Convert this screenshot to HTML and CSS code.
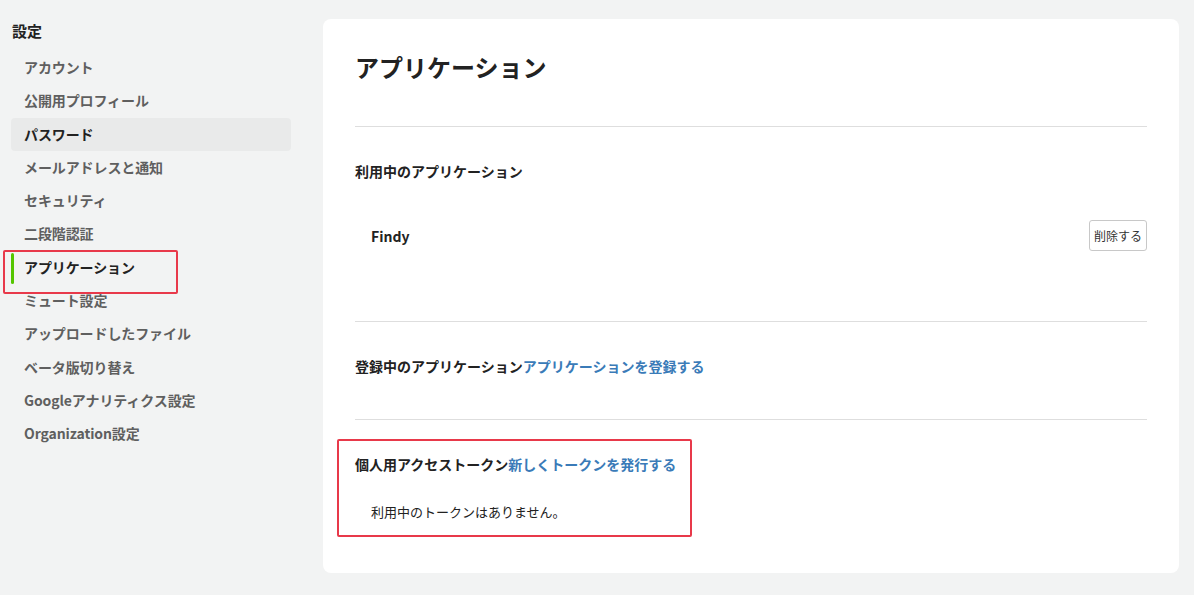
FILE: index.html
```html
<!DOCTYPE html>
<html lang="ja">
<head>
<meta charset="utf-8">
<title>設定 - アプリケーション</title>
<link rel="stylesheet" href="styles.css">
</head>
<body>
<div class="page">
  <nav class="sidebar">
    <div class="sidebar-title">設定</div>
    <ul class="menu">
      <li class="menu-item">アカウント</li>
      <li class="menu-item">公開用プロフィール</li>
      <li class="menu-item is-hover">パスワード</li>
      <li class="menu-item">メールアドレスと通知</li>
      <li class="menu-item">セキュリティ</li>
      <li class="menu-item">二段階認証</li>
      <li class="menu-item is-active">アプリケーション<span class="mark mark-side"></span></li>
      <li class="menu-item">ミュート設定</li>
      <li class="menu-item">アップロードしたファイル</li>
      <li class="menu-item">ベータ版切り替え</li>
      <li class="menu-item">Googleアナリティクス設定</li>
      <li class="menu-item">Organization設定</li>
    </ul>
  </nav>
  <main class="card">
    <h1 class="card-title">アプリケーション</h1>
    <section class="section section-used">
      <h2 class="section-heading">利用中のアプリケーション</h2>
      <div class="app-row">
        <span class="app-name">Findy</span>
        <button class="btn">削除する</button>
      </div>
    </section>
    <section class="section section-registered">
      <h2 class="section-heading">登録中のアプリケーション<a class="link">アプリケーションを登録する</a></h2>
    </section>
    <section class="section section-token">
      <h2 class="section-heading">個人用アクセストークン<a class="link">新しくトークンを発行する</a></h2>
      <p class="empty">利用中のトークンはありません。</p>
      <span class="mark mark-token"></span>
    </section>
  </main>
</div>
</body>
</html>
```
FILE: styles.css
```css
* { box-sizing: border-box; }
html, body { margin: 0; padding: 0; }
body {
  background: #f2f3f3;
  font-family: "Noto Sans CJK JP", "Noto Sans", sans-serif;
  color: #222;
}
.page {
  display: flex;
  align-items: flex-start;
  gap: 32px;
  padding: 19px 15px 22px 11px;
}
.sidebar {
  width: 280px;
  flex: none;
}
.sidebar-title {
  font-size: 15px;
  font-weight: 700;
  line-height: 24px;
  padding-left: 1px;
  color: #222;
}
.menu {
  list-style: none;
  margin: 0;
  padding: 0;
  margin-top: 8px;
}
.menu-item {
  position: relative;
  height: 33.3px;
  line-height: 33.3px;
  padding-left: 13px;
  font-size: 14px;
  font-weight: 700;
  color: #5f5f5f;
  border-radius: 4px;
  letter-spacing: -0.1px;
}
.menu-item.is-hover {
  background: #e9eaea;
  color: #222;
}
.menu-item.is-active {
  color: #222;
}
.menu-item.is-active::before {
  content: "";
  position: absolute;
  left: 0;
  top: 2px;
  bottom: 0;
  width: 3px;
  border-radius: 2px;
  background: #55c500;
}
.mark {
  position: absolute;
  border: 2px solid #e8394a;
  border-radius: 2px;
  pointer-events: none;
}
.mark-side {
  left: -8px;
  top: -1px;
  width: 175px;
  height: 44px;
}
.card {
  flex: 1;
  background: #fff;
  border-radius: 8px;
  padding: 30px 32px 51px;
}
.card-title {
  margin: 0;
  font-size: 24px;
  line-height: 36px;
  font-weight: 700;
  color: #222;
  padding-bottom: 41px;
}
.section {
  position: relative;
  border-top: 1px solid #dedede;
  padding-top: 34px;
}
.section-heading {
  margin: 0;
  font-size: 14px;
  line-height: 21px;
  font-weight: 700;
  color: #222;
}
.link {
  color: #3a7bb8;
  text-decoration: none;
}
.section-used { padding-bottom: 70px; }
.app-row {
  display: flex;
  align-items: center;
  justify-content: space-between;
  margin-top: 38px;
  padding-left: 16px;
  height: 31px;
}
.app-name {
  font-size: 14px;
  font-weight: 700;
  color: #222;
}
.btn {
  font-family: inherit;
  font-size: 12px;
  color: #333;
  background: #fff;
  border: 1px solid #c8c8c8;
  border-radius: 3px;
  height: 31px;
  padding: 0 4px;
}
.section-registered { padding-bottom: 42px; }
.empty {
  margin: 27px 0 0;
  padding-left: 16px;
  font-size: 13px;
  line-height: 20px;
  color: #222;
}
.mark-token {
  left: -18px;
  top: 19px;
  width: 355px;
  height: 98px;
}
```
